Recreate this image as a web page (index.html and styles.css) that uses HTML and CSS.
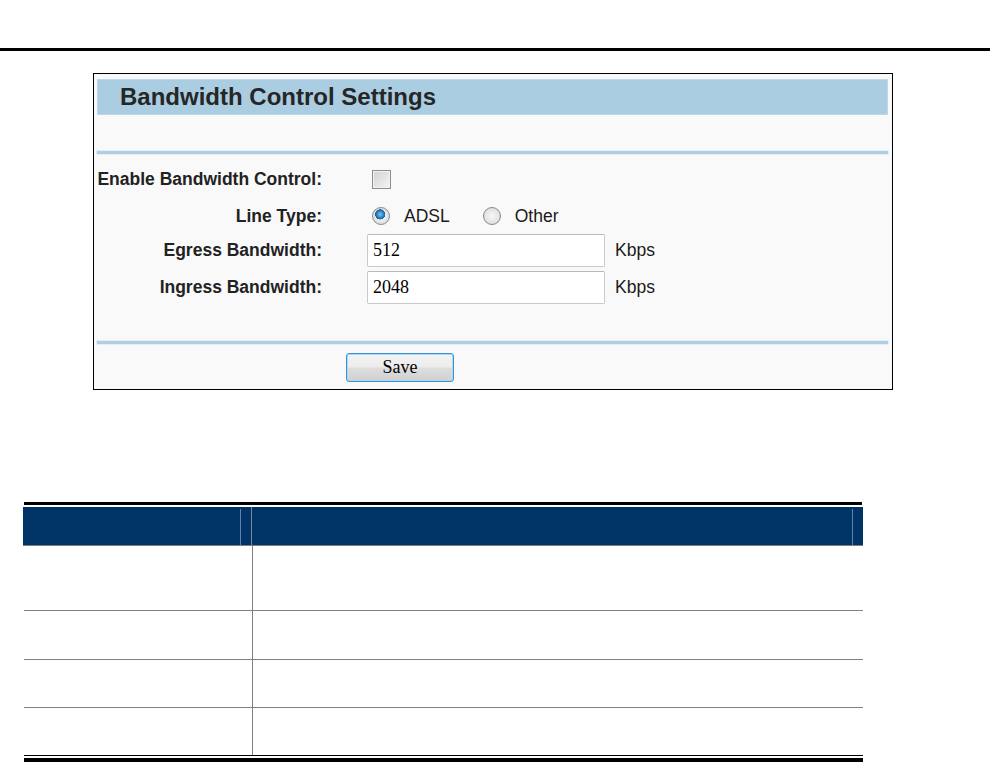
FILE: index.html
```html
<!DOCTYPE html>
<html>
<head>
<meta charset="utf-8">
<link rel="stylesheet" href="styles.css">
</head>
<body>
<div class="page-rule"></div>

<div class="panel">
  <div class="panel-head">Bandwidth Control Settings</div>
  <div class="panel-blank"></div>
  <div class="sep"></div>
  <div class="form">
    <div class="row r1">
      <span class="label">Enable Bandwidth Control:</span>
      <div class="ctl"><input type="checkbox" class="chk"></div>
    </div>
    <div class="row r2">
      <span class="label">Line Type:</span>
      <div class="ctl">
        <input type="radio" name="lt" class="radio" checked><span class="opt">ADSL</span>
        <input type="radio" name="lt" class="radio radio-2"><span class="opt">Other</span>
      </div>
    </div>
    <div class="row r3">
      <span class="label">Egress Bandwidth:</span>
      <div class="ctl"><input type="text" class="field" value="512"><span class="unit">Kbps</span></div>
    </div>
    <div class="row r4">
      <span class="label">Ingress Bandwidth:</span>
      <div class="ctl"><input type="text" class="field" value="2048"><span class="unit">Kbps</span></div>
    </div>
  </div>
  <div class="sep"></div>
  <div class="actions"><button class="save">Save</button></div>
</div>

<div class="table">
  <div class="t-top"></div>
  <div class="t-head">
    <div class="th th-1"><span class="th-edge"></span></div>
    <div class="th th-2"><span class="th-edge"></span></div>
  </div>
  <div class="t-row tr-1"><div class="td td-1"></div><div class="td"></div></div>
  <div class="t-row tr-2"><div class="td td-1"></div><div class="td"></div></div>
  <div class="t-row tr-3"><div class="td td-1"></div><div class="td"></div></div>
  <div class="t-row tr-4 last"><div class="td td-1"></div><div class="td"></div></div>
  <div class="t-bottom"></div>
</div>
</body>
</html>
```

FILE: styles.css
```css
html, body {
  margin: 0;
  padding: 0;
  background: #ffffff;
}

body {
  font-family: "Liberation Sans", Arial, sans-serif;
  color: #222;
  height: 762px;
  overflow: hidden;
}

.page-rule {
  margin-top: 48px;
  height: 3px;
  background: #000;
}

.panel {
  margin: 22px 0 0 93px;
  border: 1px solid #000;
  background: #f9f9f9;
  padding: 5px 4px 0 3px;
  box-sizing: content-box;
  width: 791px;
}

.panel-head {
  height: 36px;
  line-height: 36px;
  background: #abcde1;
  box-shadow: inset 0 0 0 1px #bcd8e8;
  padding-left: 23px;
  font-size: 24px;
  font-weight: bold;
  color: #262626;
}

.panel-blank {
  height: 36px;
}

.sep {
  height: 3px;
  background: #aecfe3;
  box-shadow: 0 0 0 0.5px #cfe3ef;
}

.form {
  padding: 9px 0 37px 0;
}

.row {
  display: grid;
  grid-template-columns: 225px 1fr;
  column-gap: 45px;
  align-items: center;
  height: 33px;
}

.r2 { margin-top: 4px; height: 32px; }
.r3 { margin-top: 2px; }
.r4 { margin-top: 4px; }

.label {
  text-align: right;
  font-size: 17.5px;
  font-weight: bold;
  color: #222;
  white-space: nowrap;
}

.ctl {
  display: flex;
  align-items: center;
}

.chk {
  appearance: none;
  -webkit-appearance: none;
  margin: 0 0 0 5px;
  width: 19px;
  height: 19px;
  border: 1px solid #8e8e8e;
  box-sizing: border-box;
  background: linear-gradient(135deg, #d2d2d2, #f4f4f4);
  box-shadow: inset 0 0 0 1px #f2f2f2;
}

.radio {
  appearance: none;
  -webkit-appearance: none;
  margin: 0 0 0 5px;
  width: 18px;
  height: 18px;
  border-radius: 50%;
  border: 1px solid #8a8a8a;
  box-sizing: border-box;
  background: radial-gradient(circle at 50% 50%, #f6f6f6 0, #e6e6e6 55%, #cfcfcf 100%);
}

.radio:checked {
  background:
    radial-gradient(circle at 45% 40%, #7fc4ef 0, #2a86c8 25%, #1a5e9a 38%, transparent 40%),
    radial-gradient(circle at 50% 50%, #f6f6f6 0, #e6e6e6 55%, #cfcfcf 100%);
}

.radio-2 {
  margin-left: 33px;
}

.opt {
  margin-left: 14px;
  font-size: 17.5px;
  color: #1a1a1a;
}

.field {
  width: 238px;
  height: 33px;
  box-sizing: border-box;
  margin: 0;
  border: 1px solid #c9c9c9;
  border-top-color: #b9b9b9;
  border-radius: 2px;
  background: #fff;
  padding: 0 0 0 5px;
  font-family: "Liberation Serif", "Times New Roman", serif;
  font-size: 18px;
  color: #000;
  outline: none;
}

.unit {
  margin-left: 10px;
  font-size: 17.5px;
  color: #1a1a1a;
}

.actions {
  padding: 9px 0 7px 249px;
}

.save {
  display: block;
  width: 108px;
  height: 29px;
  margin: 0;
  padding: 0;
  border: 1px solid #3c8fd0;
  border-radius: 3px;
  box-shadow: inset 0 0 0 1px #a9dbf7;
  background: linear-gradient(#f4f4f4 0, #ececec 48%, #dedede 52%, #d0d0d0 100%);
  font-family: "Liberation Serif", "Times New Roman", serif;
  font-size: 18px;
  color: #000;
  line-height: 27px;
}

.table {
  margin: 112px 0 0 23px;
  width: 840px;
}

.t-top {
  height: 3px;
  background: #000;
  margin-left: 1px;
  margin-right: 1px;
}

.t-head {
  margin-top: 2px;
  height: 38px;
  display: grid;
  grid-template-columns: 229px 1fr;
  background: #003466;
  border-bottom: 1px solid #808080;
}

.th {
  display: flex;
  justify-content: flex-end;
  padding: 2px 10px 0 0;
}

.th-1 {
  border-right: 1px solid #7d8894;
}

.th-edge {
  width: 1px;
  background: #5d82ad;
}

.t-row {
  display: grid;
  grid-template-columns: 229px 1fr;
  border-bottom: 1px solid #808080;
  margin-left: 1px;
}

.tr-1 { height: 64px; }
.tr-2 { height: 48px; }
.tr-3 { height: 47px; }
.tr-4 { height: 47px; }

.t-row.last {
  border-bottom: 1px solid #000;
}

.td-1 {
  border-right: 1px solid #808080;
  margin-left: -1px;
}

.t-bottom {
  margin-top: 2px;
  height: 4px;
  background: #000;
  margin-left: 1px;
}
```
